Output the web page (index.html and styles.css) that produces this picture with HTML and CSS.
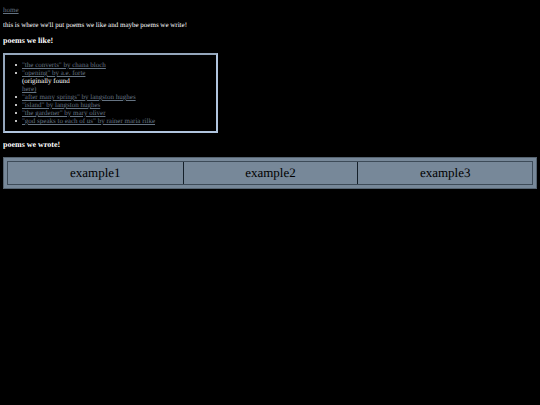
FILE: index.html
```html
<!DOCTYPE html>
<html lang="en">
<head>
<meta charset="utf-8">
<title>poems</title>
<link rel="stylesheet" href="styles.css">
</head>
<body>
<nav><a href="#">home</a></nav>
<p class="intro">this is where we'll put poems we like and maybe poems we write!</p>
<h3>poems we like!</h3>
<div class="liked">
<ul>
<li><a href="#">"the converts" by chana bloch</a></li>
<li><a href="#">"opening" by a.e. forte</a><br>(originally found<br><a href="#">here)</a></li>
<li><a href="#">"after many springs" by langston hughes</a></li>
<li><a href="#">"island" by langston hughes</a></li>
<li><a href="#">"the gardener" by mary oliver</a></li>
<li><a href="#">"god speaks to each of us" by rainer maria rilke</a></li>
</ul>
</div>
<h3>poems we wrote!</h3>
<div class="wrote">
<div class="grid">
<div class="cell">example1</div>
<div class="cell">example2</div>
<div class="cell">example3</div>
</div>
</div>
</body>
</html>
```
FILE: styles.css
```css
* {
  box-sizing: border-box;
}

html {
  background: #000;
}

body {
  margin: 6px 3px 0;
  color: #fff;
  font: 7px/8px "Liberation Serif", serif;
  text-rendering: geometricPrecision;
}

a {
  color: #657382;
}

.intro {
  margin: 7px 0 8px;
}

h3 {
  margin: 8px 0;
  font-size: 8px;
  line-height: 8px;
}

.liked {
  width: 215px;
  max-width: 100%;
  padding: 6px 0;
  border: 2px solid #b0c4de;
  border-top-color: #94a6bb;
  border-left-color: #94a6bb;
}

ul {
  margin: 0;
  padding-left: 17px;
  list-style: none;
}

li {
  position: relative;
}

li::before {
  content: "";
  position: absolute;
  top: 3px;
  left: -7px;
  width: 2px;
  height: 2px;
  border-radius: 1px;
  background: #fff;
}

.wrote {
  padding: 3px;
  background: #778899;
  border: 1px solid #566471;
}

.grid {
  display: grid;
  grid-template-columns: repeat(3, 1fr);
  border: 1px solid #3d4b58;
}

.cell {
  color: #000;
  font-size: 13px;
  line-height: 22px;
  text-align: center;
}

.cell + .cell {
  border-left: 1px solid #15202a;
}
```
